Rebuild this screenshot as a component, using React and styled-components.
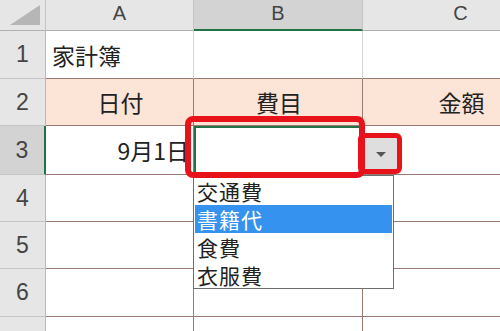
import styled, { createGlobalStyle } from "styled-components";

const GlobalStyle = createGlobalStyle`
    body {
        margin: 0;
        background: #fff;
        overflow: hidden;
        font-family: "Liberation Sans", "Noto Sans CJK JP", sans-serif;
    }
`

const JP = `"Noto Sans CJK JP", "Liberation Sans", sans-serif`

const Sheet = styled.div`
    position: relative;
    width: 500px;
    height: 331px;
    overflow: hidden;
`

const Grid = styled.div`
    display: grid;
    grid-template-columns: 46px 148px 169px 196px;
    grid-template-rows: 31px 48px 47px 49px 47px 47px 48px 48px;
    width: 559px;
`

const Corner = styled.div`
    position: relative;
    background: #e6e6e6;
    border-right: 1px solid #c4c4c4;
    border-bottom: 1px solid #b0b0b0;
    box-sizing: border-box;

    &::after {
        content: "";
        position: absolute;
        left: 10px;
        top: 5px;
        width: 30px;
        height: 20px;
        background: #b6b6b6;
        clip-path: polygon(100% 0, 100% 100%, 0 100%);
    }
`

const ColHead = styled.div`
    display: flex;
    align-items: center;
    justify-content: center;
    box-sizing: border-box;
    background: ${p => p.$active ? '#d3d3d3' : '#e6e6e6'};
    border-right: 1px solid #c4c4c4;
    border-bottom: ${p => p.$active ? '2px solid #217346' : '1px solid #b0b0b0'};
    color: #444;
    font-size: 20px;
    padding-bottom: 3px;
`

const RowHead = styled.div`
    display: flex;
    align-items: center;
    justify-content: center;
    box-sizing: border-box;
    background: ${p => p.$active ? '#d3d3d3' : '#e6e6e6'};
    border-right: ${p => p.$active ? '2px solid #217346' : '1px solid #b8b8b8'};
    border-bottom: 1px solid #c4c4c4;
    color: #444;
    font-size: 23px;
`

const Cell = styled.div`
    display: flex;
    align-items: center;
    justify-content: ${p => p.$align === 'center' ? 'center' : p.$align === 'right' ? 'flex-end' : 'flex-start'};
    box-sizing: border-box;
    padding: 0 4px 0 6px;
    background: ${p => p.$tone === 'head' ? '#fce4d6' : '#fff'};
    border-right: 1px solid ${p => p.$tone === 'plain' ? '#d6d6d6' : '#9a7a73'};
    border-bottom: 1px solid #9a7a73;
    box-shadow: ${p => p.$selected ? 'inset 0 0 0 2px #217346' : 'none'};
    color: #222;
    font-family: ${JP};
    font-size: 23px;
    white-space: nowrap;
    overflow: hidden;
`

const Highlight = styled.div`
    position: absolute;
    left: ${p => p.$x}px;
    top: ${p => p.$y}px;
    width: ${p => p.$w}px;
    height: ${p => p.$h}px;
    box-sizing: border-box;
    border: ${p => p.$t}px solid #e8121a;
    border-radius: ${p => p.$r}px;
    z-index: 3;
`

const DropButton = styled.div`
    position: absolute;
    left: 364px;
    top: 137px;
    width: 33px;
    height: 33px;
    background: #dedede;
    display: flex;
    align-items: center;
    justify-content: center;
    z-index: 2;

    &::after {
        content: "";
        border-left: 5px solid transparent;
        border-right: 5px solid transparent;
        border-top: 5px solid #555;
        margin-top: 2px;
    }
`

const List = styled.ul`
    position: absolute;
    left: 193px;
    top: 175px;
    width: 201px;
    height: 114px;
    box-sizing: border-box;
    margin: 0;
    padding: 1px;
    list-style: none;
    background: #fff;
    border: 1px solid #6d6d6d;
    z-index: 2;
`

const Item = styled.li`
    height: 28px;
    display: flex;
    align-items: center;
    padding-left: 2px;
    background: ${p => p.$on ? '#3592ee' : 'transparent'};
    color: ${p => p.$on ? '#fff' : '#222'};
    font-family: ${JP};
    font-size: 21px;
    line-height: 24px;
    letter-spacing: 1px;
`

const rows = [
    { n: 1, tone: 'plain', cells: [['家計簿', 'left'], ['', 'left'], ['', 'left']] },
    { n: 2, tone: 'head', cells: [['日付', 'center'], ['費目', 'center'], ['金額', 'center']] },
    { n: 3, tone: 'data', cells: [['9月1日', 'right'], ['', 'left'], ['', 'left']], active: true },
    { n: 4, tone: 'data', cells: [['', 'left'], ['', 'left'], ['', 'left']] },
    { n: 5, tone: 'data', cells: [['', 'left'], ['', 'left'], ['', 'left']] },
    { n: 6, tone: 'data', cells: [['', 'left'], ['', 'left'], ['', 'left']] },
    { n: 7, tone: 'data', cells: [['', 'left'], ['', 'left'], ['', 'left']] },
]

const options = ['交通費', '書籍代', '食費', '衣服費']

export default function App() {
    return (
        <Sheet>
            <GlobalStyle />
            <Grid>
                <Corner />
                <ColHead>A</ColHead>
                <ColHead $active>B</ColHead>
                <ColHead>C</ColHead>
                {rows.map(r => [
                    <RowHead key={'h' + r.n} $active={r.active}>{r.n}</RowHead>,
                    ...r.cells.map(([text, align], i) => (
                        <Cell key={r.n + '-' + i} $tone={r.tone} $align={align} $selected={r.active && i === 1}>{text}</Cell>
                    ))
                ])}
            </Grid>
            <DropButton />
            <List>
                {options.map((o, i) => <Item key={o} $on={i === 1}>{o}</Item>)}
            </List>
            <Highlight $x={185} $y={116} $w={180} $h={62} $t={6} $r={8} />
            <Highlight $x={358} $y={133} $w={44} $h={41} $t={5} $r={6} />
        </Sheet>
    )
}
